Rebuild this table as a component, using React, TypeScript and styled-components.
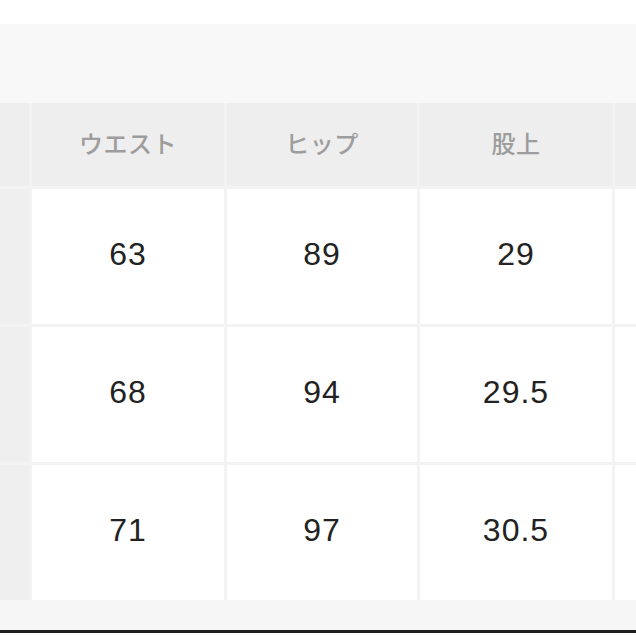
import styled, { createGlobalStyle } from 'styled-components';

// サイズ表（ウエスト・ヒップ・股上）

interface SizeRow {
  waist: string;
  hip: string;
  rise: string;
}

const rows: Array<SizeRow> = [
  { waist: '63', hip: '89', rise: '29' },
  { waist: '68', hip: '94', rise: '29.5' },
  { waist: '71', hip: '97', rise: '30.5' },
];

const headers = ['ウエスト', 'ヒップ', '股上'];

const GlobalStyle = createGlobalStyle`
  html, body {
    margin: 0;
    padding: 0;
    background: #ffffff;
  }
  body {
    font-family: "Liberation Sans", "Noto Sans CJK JP", sans-serif;
  }
`;

const Page = styled.div`
  width: 636px;
  height: 636px;
  overflow: hidden;
  display: flex;
  flex-direction: column;
  background: #ffffff;
`;

const TopSpacer = styled.div`
  height: 24px;
  flex: none;
`;

const CaptionBand = styled.div`
  height: 79px;
  flex: none;
  background: #f8f8f8;
`;

const Grid = styled.div`
  display: grid;
  grid-template-columns: 29px 192px 190px 192px 1fr;
  grid-template-rows: 83px 135px 135px 135px;
  gap: 3px;
  background: #f3f3f3;
  flex: none;
`;

const HeadCell = styled.div`
  background: #eeeeee;
  display: flex;
  align-items: center;
  justify-content: center;
  padding-bottom: 4px;
  font-family: "Noto Sans CJK JP", sans-serif;
  font-size: 24px;
  font-weight: 500;
  color: #9d9d9d;
  letter-spacing: 0.5px;
`;

const StubCell = styled.div<{ $head?: boolean }>`
  background: ${(p) => (p.$head ? '#eeeeee' : '#efefef')};
`;

const ValueCell = styled.div`
  background: #ffffff;
  display: flex;
  align-items: center;
  justify-content: center;
  padding-bottom: 4px;
  font-family: "Liberation Sans", Arial, sans-serif;
  font-size: 32px;
  letter-spacing: 1px;
  color: #222222;
`;

const BottomBand = styled.div`
  height: 30px;
  flex: none;
  background: #f6f6f6;
`;

const BottomLine = styled.div`
  height: 3px;
  flex: none;
  background: #1e1e1e;
`;

export default function App() {
  return (
    <>
      <GlobalStyle />
      <Page>
        <TopSpacer />
        <CaptionBand />
        <Grid>
          <StubCell $head />
          {headers.map((h) => (
            <HeadCell key={h}>{h}</HeadCell>
          ))}
          <HeadCell />
          {rows.map((r, i) => (
            <>
              <StubCell key={`stub-${i}`} />
              <ValueCell key={`w-${i}`}>{r.waist}</ValueCell>
              <ValueCell key={`h-${i}`}>{r.hip}</ValueCell>
              <ValueCell key={`r-${i}`}>{r.rise}</ValueCell>
              <ValueCell key={`x-${i}`} />
            </>
          ))}
        </Grid>
        <BottomBand />
        <BottomLine />
      </Page>
    </>
  );
}
